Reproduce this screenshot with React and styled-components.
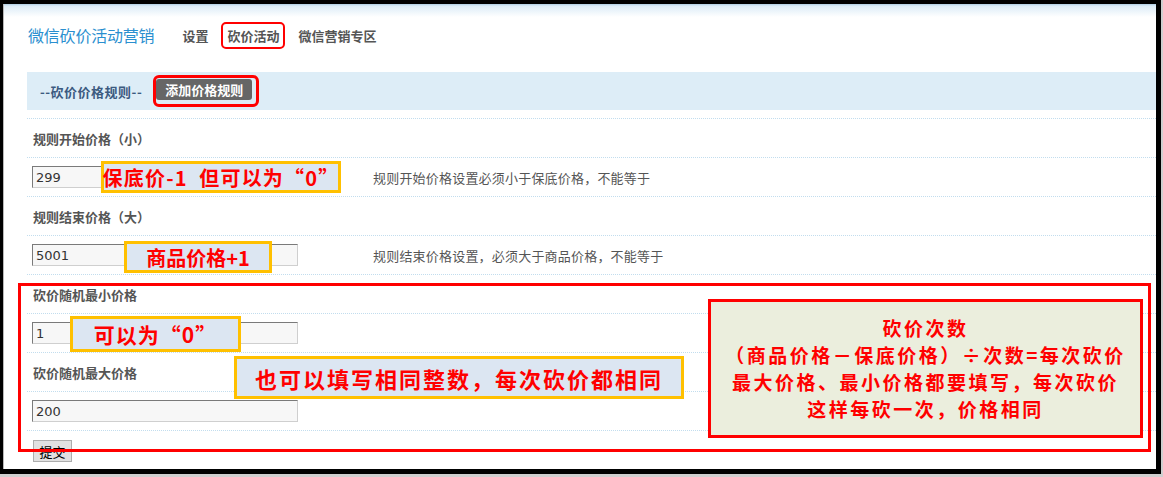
import React from 'react'
import styled, { createGlobalStyle } from 'styled-components'

const GlobalStyle = createGlobalStyle`
  html, body {
    margin: 0;
    padding: 0;
  }
  body {
    background: #cfcfcf;
    font-family: 'Noto Sans CJK SC', 'Liberation Sans', sans-serif;
  }
`

const Frame = styled.div`
  position: relative;
  box-sizing: border-box;
  width: 1161px;
  height: 474px;
  border-style: solid;
  border-color: #000;
  border-width: 4px 5px 5px 3px;
  background: #fff;
  overflow: hidden;
`

const Page = styled.div`
  box-sizing: border-box;
  height: 100%;
  padding: 11px 0 0 24px;
  box-shadow: inset 1px 0 0 #b8b8b8;
  background: #fff
    linear-gradient(to bottom, #aecde3 0, #dcecf7 2px, #ffffff 13px) top /
    100% 14px no-repeat;
`

const Header = styled.div`
  display: flex;
  align-items: center;
  height: 40px;
  padding-left: 1px;
`

const Title = styled.div`
  font-size: 16px;
  color: #2a8fcf;
  letter-spacing: -0.2px;
`

const Nav = styled.div`
  display: flex;
  align-items: center;
  gap: 7px;
  margin-left: 22px;
`

const NavItem = styled.div`
  padding: 4px;
  border: 2px solid ${(p) => (p.$active ? '#f00' : 'transparent')};
  border-radius: 5px;
  font-size: 13px;
  font-weight: bold;
  line-height: 15px;
  color: #555;
`

const Bar = styled.div`
  display: flex;
  align-items: center;
  height: 38px;
  margin-top: 17px;
  padding-left: 13px;
  background: #ddedf7;
`

const BarTitle = styled.div`
  font-size: 13px;
  font-weight: bold;
  color: #3b5a80;
  letter-spacing: 0.5px;
`

const Mark = styled.div`
  display: flex;
  margin-left: 11px;
  padding: 1px 4px 4px 0;
  border: 3px solid #f00;
  border-radius: 6px;
`

const AddButton = styled.div`
  display: flex;
  align-items: center;
  justify-content: center;
  width: 96px;
  height: 21px;
  border-radius: 3px;
  background: #666;
  color: #fff;
  font-size: 13px;
  font-weight: bold;
`

const Form = styled.div`
  margin-top: 8px;
  border-bottom: 1px dotted #c2ddee;
`

const Row = styled.div`
  box-sizing: border-box;
  display: grid;
  grid-template-columns: 338px 1fr;
  align-items: center;
  height: 39px;
  border-top: 1px dotted #c2ddee;
`

const Label = styled.div`
  grid-column: 1 / -1;
  padding-left: 6px;
  font-size: 13px;
  font-weight: bold;
  color: #555;
`

const InputCell = styled.div`
  padding-left: 5px;
  display: flex;
`

const Input = styled.input`
  box-sizing: border-box;
  width: 266px;
  height: 22px;
  margin: 0;
  padding: 0 3px;
  border: 1px solid;
  border-color: #7a7a7a #cfcfcf #cfcfcf #7a7a7a;
  background: #f7f7f7;
  font: 13px 'DejaVu Sans', sans-serif;
  color: #333;
  outline: none;
`

const Help = styled.div`
  padding-left: 8px;
  font-size: 13px;
  color: #555;
  letter-spacing: 0.2px;
`

const Submit = styled.button`
  box-sizing: border-box;
  width: 39px;
  height: 22px;
  margin: 9px 0 0 6px;
  padding: 0;
  border: 1px solid #adadad;
  background: #e1e1e1;
  font: 13px 'Noto Sans CJK SC', sans-serif;
  color: #000;
`

const Callout = styled.div`
  position: absolute;
  left: ${(p) => p.$x}px;
  top: ${(p) => p.$y}px;
  width: ${(p) => p.$w}px;
  height: ${(p) => p.$h}px;
  box-sizing: border-box;
  display: flex;
  align-items: center;
  justify-content: center;
  border: 3px solid #ffc000;
  background: #dce6f2;
  color: #f00;
  font-size: ${(p) => p.$size}px;
  font-weight: bold;
  letter-spacing: ${(p) => p.$spacing || 0}px;
  white-space: pre;
`

const RedFrame = styled.div`
  position: absolute;
  left: 15px;
  top: 279px;
  width: 1133px;
  height: 169px;
  box-sizing: border-box;
  border: 3px solid #f00;
`

const Note = styled.div`
  position: absolute;
  left: 705px;
  top: 295px;
  width: 435px;
  height: 139px;
  box-sizing: border-box;
  padding-top: 12px;
  border: 3px solid #f00;
  background: #ebeedd;
  color: #f00;
  font-size: 19px;
  font-weight: bold;
  line-height: 27px;
  letter-spacing: 2.5px;
  text-align: center;
`

const fields = [
  { label: '规则开始价格（小）', value: '299', help: '规则开始价格设置必须小于保底价格，不能等于' },
  { label: '规则结束价格（大）', value: '5001', help: '规则结束价格设置，必须大于商品价格，不能等于' },
  { label: '砍价随机最小价格', value: '1' },
  { label: '砍价随机最大价格', value: '200' },
]

const callouts = [
  { x: 98, y: 157, w: 240, h: 32, size: 20, spacing: 1.2, text: '保底价-1  但可以为“0”' },
  { x: 121, y: 237, w: 148, h: 32, size: 20, text: '商品价格+1' },
  { x: 67, y: 312, w: 171, h: 36, size: 21, spacing: 1, text: '可以为“0”' },
  { x: 231, y: 352, w: 450, h: 43, size: 22, spacing: 2, text: '也可以填写相同整数，每次砍价都相同' },
]

const App = () => (
  <>
    <GlobalStyle />
    <Frame>
      <Page>
        <Header>
          <Title>微信砍价活动营销</Title>
          <Nav>
            <NavItem>设置</NavItem>
            <NavItem $active>砍价活动</NavItem>
            <NavItem>微信营销专区</NavItem>
          </Nav>
        </Header>
        <Bar>
          <BarTitle>--砍价价格规则--</BarTitle>
          <Mark>
            <AddButton>添加价格规则</AddButton>
          </Mark>
        </Bar>
        <Form>
          {fields.map((f) => (
            <React.Fragment key={f.label}>
              <Row>
                <Label>{f.label}</Label>
              </Row>
              <Row>
                <InputCell>
                  <Input type="text" defaultValue={f.value} />
                </InputCell>
                {f.help && <Help>{f.help}</Help>}
              </Row>
            </React.Fragment>
          ))}
        </Form>
        <Submit type="button">提交</Submit>
      </Page>
      <RedFrame />
      {callouts.map((c) => (
        <Callout key={c.text} $x={c.x} $y={c.y} $w={c.w} $h={c.h} $size={c.size} $spacing={c.spacing}>
          {c.text}
        </Callout>
      ))}
      <Note>
        <div>砍价次数</div>
        <div>（商品价格－保底价格）÷次数=每次砍价</div>
        <div>最大价格、最小价格都要填写，每次砍价</div>
        <div>这样每砍一次，价格相同</div>
      </Note>
    </Frame>
  </>
)

export default App
